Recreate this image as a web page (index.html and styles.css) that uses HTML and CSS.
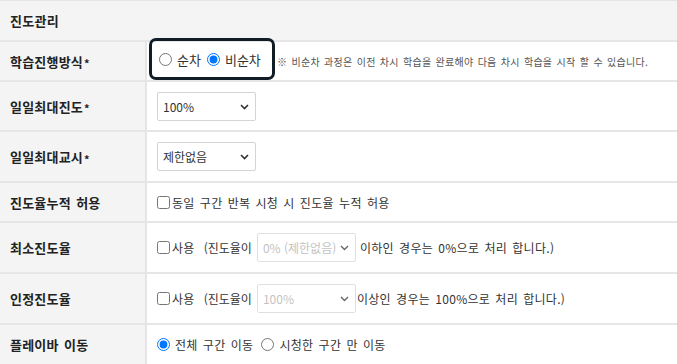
FILE: index.html
```html
<!DOCTYPE html>
<html lang="ko">
<head>
<meta charset="utf-8">
<title>진도관리</title>
<link rel="stylesheet" href="styles.css">
</head>
<body>
<div class="panel">
  <div class="head">진도관리</div>

  <div class="row h40">
    <div class="th">학습진행방식<span class="req">*</span></div>
    <div class="td">
      <div class="focusbox">
        <label class="opt big"><input type="radio" name="mode">순차</label>
        <label class="opt big"><input type="radio" name="mode" checked>비순차</label>
      </div>
      <span class="note">※ 비순차 과정은 이전 차시 학습을 완료해야 다음 차시 학습을 시작 할 수 있습니다.</span>
    </div>
  </div>

  <div class="row h50">
    <div class="th">일일최대진도<span class="req">*</span></div>
    <div class="td">
      <span class="sel">
        <select><option>100%</option></select>
        <svg class="chev" width="9" height="6" viewBox="0 0 9 6"><path d="M1 1l3.5 3.5L8 1" fill="none" stroke="#333" stroke-width="1.6"/></svg>
      </span>
    </div>
  </div>

  <div class="row h51">
    <div class="th">일일최대교시<span class="req">*</span></div>
    <div class="td">
      <span class="sel">
        <select><option>제한없음</option></select>
        <svg class="chev" width="9" height="6" viewBox="0 0 9 6"><path d="M1 1l3.5 3.5L8 1" fill="none" stroke="#333" stroke-width="1.6"/></svg>
      </span>
    </div>
  </div>

  <div class="row h40">
    <div class="th">진도율누적 허용</div>
    <div class="td">
      <label class="opt chk"><input type="checkbox">동일 구간 반복 시청 시 진도율 누적 허용</label>
    </div>
  </div>

  <div class="row h51">
    <div class="th">최소진도율</div>
    <div class="td">
      <label class="opt chk"><input type="checkbox">사용</label>
      <span class="paren">(진도율이</span>
      <span class="sel dis">
        <select disabled><option>0% (제한없음)</option></select>
        <svg class="chev" width="9" height="6" viewBox="0 0 9 6"><path d="M1 1l3.5 3.5L8 1" fill="none" stroke="#666" stroke-width="1.4"/></svg>
      </span>
      <span class="after">이하인 경우는 0%으로 처리 합니다.)</span>
    </div>
  </div>

  <div class="row h51">
    <div class="th">인정진도율</div>
    <div class="td">
      <label class="opt chk"><input type="checkbox">사용</label>
      <span class="paren">(진도율이</span>
      <span class="sel dis">
        <select disabled><option>100%</option></select>
        <svg class="chev" width="9" height="6" viewBox="0 0 9 6"><path d="M1 1l3.5 3.5L8 1" fill="none" stroke="#666" stroke-width="1.4"/></svg>
      </span>
      <span class="after tight">이상인 경우는 100%으로 처리 합니다.)</span>
    </div>
  </div>

  <div class="row h41">
    <div class="th">플레이바 이동</div>
    <div class="td">
      <label class="opt"><input type="radio" name="bar" checked>전체 구간 이동</label>
      <label class="opt"><input type="radio" name="bar">시청한 구간 만 이동</label>
    </div>
  </div>
</div>
</body>
</html>
```

FILE: styles.css
```css
html, body {
  margin: 0;
  padding: 0;
  background: #ffffff;
}

body {
  font-family: "Noto Sans CJK KR", "Noto Sans", sans-serif;
  color: #333;
  word-spacing: 1.5px;
  letter-spacing: 0.3px;
}

.panel {
  width: 677px;
  border-top: 1px solid #e4e4e4;
}

.head {
  height: 39px;
  background: #f4f4f4;
  display: flex;
  align-items: center;
  padding-left: 10px;
  font-size: 13px;
  font-weight: 600;
  color: #222;
}

.row {
  display: grid;
  grid-template-columns: 147px 1fr;
  border-top: 2px solid #e6e6e6;
  box-sizing: border-box;
}

.h40 { height: 40px; }
.h41 { height: 41px; }
.h50 { height: 50px; }
.h51 { height: 51px; }

.th {
  background: #f4f4f4;
  border-right: 2px solid #e6e6e6;
  display: flex;
  align-items: center;
  padding-left: 10px;
  font-size: 13px;
  font-weight: 600;
  color: #222;
  letter-spacing: 0.2px;
}

.req {
  font-size: 11px;
  margin-left: 1px;
  position: relative;
  top: 2px;
}

.td {
  display: flex;
  align-items: center;
  padding-left: 10px;
  font-size: 12px;
  color: #333;
}

.focusbox {
  display: flex;
  align-items: center;
  height: 42px;
  box-sizing: border-box;
  margin-top: -4px;
  margin-left: -8px;
  padding: 0 7px 0 7px;
  border: 3px solid #111c27;
  border-radius: 7px;
  gap: 6px;
  width: 126px;
  letter-spacing: 0;
}

.opt {
  display: inline-flex;
  align-items: center;
  white-space: nowrap;
}

.opt input {
  margin: 0 5px 0 0;
  width: 13px;
  height: 13px;
}

.opt.big {
  font-size: 13px;
}

.opt + .opt {
  margin-left: 8px;
}

.focusbox .opt + .opt {
  margin-left: 0;
}

.note {
  font-size: 10px;
  word-spacing: 1.2px;
  letter-spacing: 0.25px;
  color: #555;
  margin-left: 2px;
  white-space: nowrap;
}

.chk input {
  margin-right: 2px;
}

.paren {
  margin-left: 9px;
  letter-spacing: 0;
}

.sel {
  position: relative;
  display: inline-block;
}

.sel select {
  appearance: none;
  -webkit-appearance: none;
  width: 99px;
  height: 29px;
  box-sizing: border-box;
  border: 1px solid #d4d4d4;
  border-radius: 2px;
  background: #fff;
  padding: 0 0 0 5px;
  font-family: inherit;
  font-size: 12px;
  word-spacing: 0;
  letter-spacing: 0;
  color: #333;
  display: block;
}

.sel.dis select {
  color: #aaa;
  margin-left: 5px;
}

.chev {
  position: absolute;
  right: 7px;
  top: 12px;
  pointer-events: none;
}

.after {
  margin-left: 4px;
  white-space: nowrap;
}

.after.tight {
  margin-left: 1px;
}
```
